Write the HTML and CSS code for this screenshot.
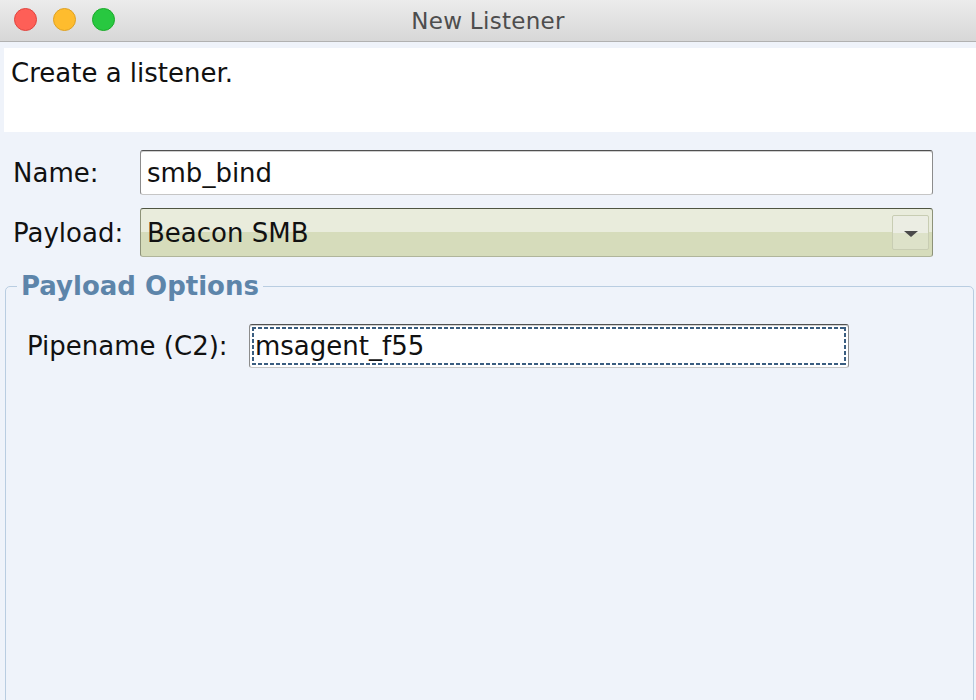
FILE: index.html
```html
<!DOCTYPE html>
<html>
<head>
<meta charset="utf-8">
<title>New Listener</title>
<link rel="stylesheet" href="styles.css">
</head>
<body>
<div class="window">
  <div class="titlebar">
    <div class="lights">
      <span class="light red"></span>
      <span class="light yellow"></span>
      <span class="light green"></span>
    </div>
    <div class="title">New Listener</div>
  </div>
  <div class="content">
    <div class="desc">Create a listener.</div>
    <div class="form">
      <div class="row">
        <label class="label">Name:</label>
        <div class="input name-input">smb_bind</div>
      </div>
      <div class="row">
        <label class="label">Payload:</label>
        <div class="combo">
          <span class="combo-text">Beacon SMB</span>
          <span class="combo-btn"><span class="arrow"></span></span>
        </div>
      </div>
    </div>
    <fieldset class="options">
      <legend class="legend">Payload Options</legend>
      <div class="opt-row">
        <label class="opt-label">Pipename (C2):</label>
        <div class="input pipe-input">msagent_f55</div>
      </div>
    </fieldset>
  </div>
</div>
</body>
</html>
```
FILE: styles.css
```css
html, body {
  margin: 0;
  padding: 0;
  width: 976px;
  height: 700px;
  overflow: hidden;
  background: #eff3fa;
}
body {
  font-family: "DejaVu Sans", "Liberation Sans", sans-serif;
  color: #111;
}
.window {
  display: flex;
  flex-direction: column;
  height: 700px;
}
.titlebar {
  position: relative;
  height: 41px;
  flex: none;
  background: linear-gradient(#ececec, #d7d7d7);
  border-bottom: 1px solid #b1b1b1;
  display: flex;
  align-items: center;
  justify-content: center;
}
.lights {
  position: absolute;
  left: 14px;
  top: 8px;
  display: flex;
  gap: 16px;
}
.light {
  width: 23px;
  height: 23px;
  border-radius: 50%;
  box-sizing: border-box;
}
.red { background: #fe5f57; border: 1px solid #e0443e; }
.yellow { background: #febc2e; border: 1px solid #dea123; }
.green { background: #28c840; border: 1px solid #1aab29; }
.title {
  font-size: 23px;
  color: #4d4d4d;
  letter-spacing: 0.3px;
  margin-top: 1px;
}
.content {
  flex: 1;
  display: flex;
  flex-direction: column;
  min-height: 0;
}
.desc {
  margin: 6px 0 0 4px;
  height: 84px;
  background: #fff;
  font-size: 26px;
  line-height: 30px;
  padding: 10px 0 0 7px;
  box-sizing: border-box;
}
.form {
  display: flex;
  flex-direction: column;
  gap: 13px;
  padding: 18px 0 0 13px;
}
.row {
  display: flex;
  align-items: center;
}
.label {
  width: 127px;
  font-size: 26px;
  flex: none;
}
.input {
  position: relative;
  box-sizing: border-box;
  background: #fff;
  border: 1px solid;
  border-color: #505050 #8c8c8c #c6c6c6 #8c8c8c;
  border-radius: 3px;
  box-shadow: inset 0 1px 0 #cfcfcf;
  font-size: 26px;
  display: flex;
  align-items: center;
  padding-left: 6px;
}
.name-input {
  width: 793px;
  height: 45px;
}
.combo {
  position: relative;
  box-sizing: border-box;
  width: 793px;
  height: 49px;
  border: 1px solid;
  border-color: #4f5542 #8d9278 #b0b59b #8d9278;
  border-radius: 3px;
  background: linear-gradient(#e9ecdc 0, #e9ecdc 50%, #d6dcbb 50%, #d6dcbb 100%);
  display: flex;
  align-items: center;
  font-size: 26px;
  padding-left: 6px;
}
.combo-text {
  flex: 1;
}
.combo-btn {
  box-sizing: border-box;
  width: 37px;
  height: 35px;
  margin-right: 3px;
  border: 1px solid #c8cdb3;
  border-radius: 2px;
  background: linear-gradient(#ebede3 0, #ebede3 50%, #dde2c9 50%, #dde2c9 100%);
  display: flex;
  align-items: center;
  justify-content: center;
}
.arrow {
  width: 0;
  height: 0;
  border-left: 7px solid transparent;
  border-right: 7px solid transparent;
  border-top: 6px solid #4a4a4a;
  margin-top: 2px;
}
.options {
  flex: 1;
  margin: 14px 2px -10px 5px;
  padding: 23px 0 0 21px;
  border: 1px solid #b9cde1;
  border-radius: 5px 5px 0 0;
  min-width: 0;
}
.legend {
  margin-left: -10px;
  padding: 0 4px;
  font-size: 26px;
  line-height: 30px;
  font-weight: bold;
  color: #5d85aa;
}
.opt-row {
  display: flex;
  align-items: center;
}
.opt-label {
  width: 222px;
  font-size: 26px;
  flex: none;
}
.pipe-input {
  width: 600px;
  height: 44px;
  padding-left: 5px;
}
.pipe-input::after {
  content: "";
  position: absolute;
  left: 2px;
  right: 2px;
  top: 2px;
  bottom: 2px;
  background:
    repeating-linear-gradient(90deg, #3a5d80 0 4px, transparent 4px 6px) top / 100% 2px no-repeat,
    repeating-linear-gradient(90deg, #3a5d80 0 4px, transparent 4px 6px) bottom / 100% 2px no-repeat,
    repeating-linear-gradient(180deg, #3a5d80 0 4px, transparent 4px 6px) left / 2px 100% no-repeat,
    repeating-linear-gradient(180deg, #3a5d80 0 4px, transparent 4px 6px) right / 2px 100% no-repeat;
}
```
